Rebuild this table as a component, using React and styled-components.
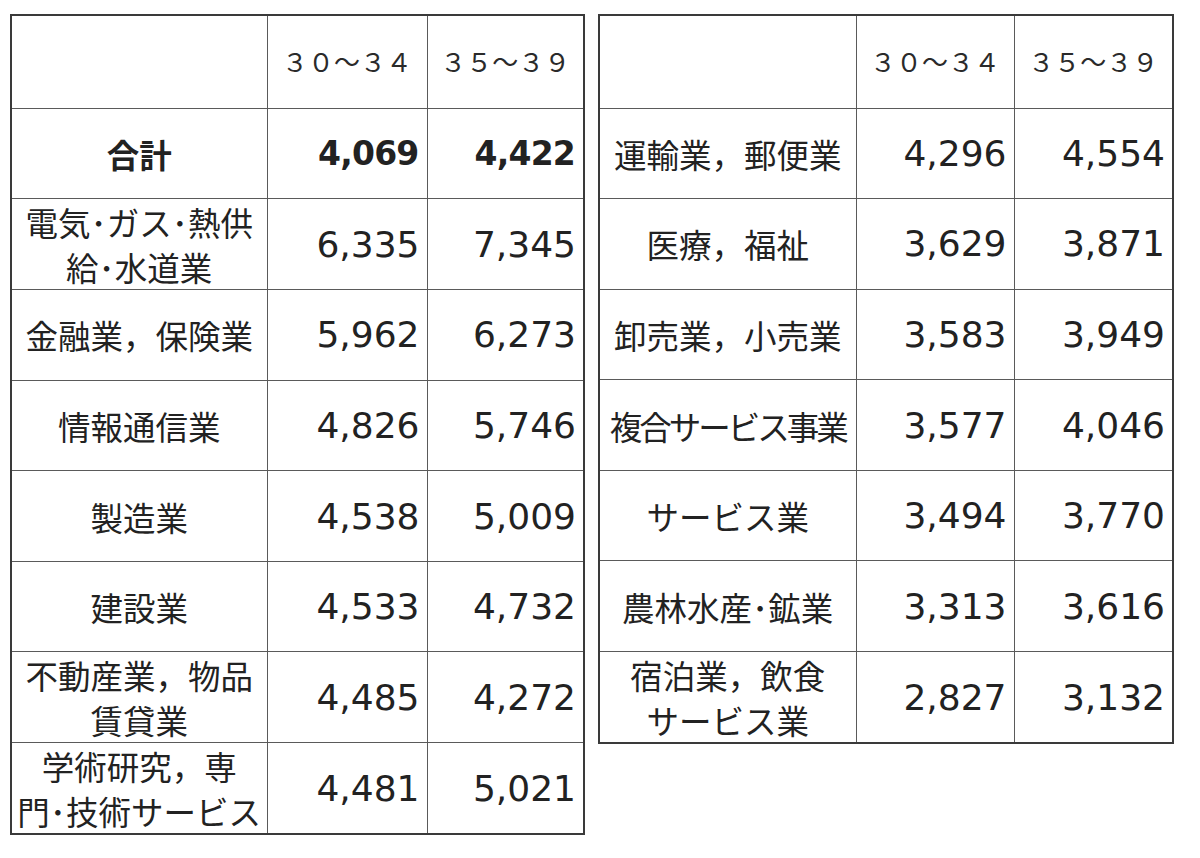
import React from 'react';
import styled, { createGlobalStyle } from 'styled-components';

const GlobalStyle = createGlobalStyle`
  html, body {
    margin: 0;
    padding: 0;
    background: #fff;
  }
`;

const Page = styled.div`
  display: flex;
  align-items: flex-start;
  gap: 13px;
  padding: 14px 0 0 10px;
  width: 1200px;
  height: 858px;
  box-sizing: border-box;
  background: #fff;
`;

const Table = styled.table`
  border-collapse: collapse;
  border: 2px solid #3a3a3a;
  table-layout: fixed;
  color: #222;
`;

const HeadRow = styled.tr`
  height: 93px;
`;

const Row = styled.tr`
  height: 90.6px;
`;

const Cell = styled.td`
  border: 1px solid #5a5a5a;
  padding: 0;
  vertical-align: middle;
  overflow: hidden;
`;

const HeadCell = styled(Cell)`
  text-align: center;
  font-family: 'Noto Sans CJK JP', sans-serif;
  font-size: 26px;
  color: #2a2a2a;
  padding-bottom: 2px;
`;

const Label = styled(Cell)`
  text-align: center;
  font-family: 'Noto Sans CJK JP', sans-serif;
  font-size: 32.5px;
  line-height: 45px;
  font-weight: ${p => (p.bold ? 700 : 400)};
  letter-spacing: ${p => (p.tight ? -3 : 0)}px;
  white-space: nowrap;
`;

const Num = styled(Cell)`
  text-align: right;
  padding-right: ${p => (p.bold ? 8 : 7)}px;
  font-family: 'DejaVu Sans', sans-serif;
  font-size: ${p => (p.bold ? 33 : 36)}px;
  font-weight: ${p => (p.bold ? 700 : 400)};
  letter-spacing: ${p => (p.bold ? -0.8 : 0)}px;
`;

const left = [
  { label: '合計', a: '4,069', b: '4,422', bold: true },
  { label: ['電気･ガス･熱供', '給･水道業'], a: '6,335', b: '7,345' },
  { label: '金融業，保険業', a: '5,962', b: '6,273' },
  { label: '情報通信業', a: '4,826', b: '5,746' },
  { label: '製造業', a: '4,538', b: '5,009' },
  { label: '建設業', a: '4,533', b: '4,732' },
  { label: ['不動産業，物品', '賃貸業'], a: '4,485', b: '4,272' },
  { label: ['学術研究，専', '門･技術サービス'], a: '4,481', b: '5,021' },
];

const right = [
  { label: '運輸業，郵便業', a: '4,296', b: '4,554' },
  { label: '医療，福祉', a: '3,629', b: '3,871' },
  { label: '卸売業，小売業', a: '3,583', b: '3,949' },
  { label: '複合サービス事業', a: '3,577', b: '4,046', tight: true },
  { label: 'サービス業', a: '3,494', b: '3,770' },
  { label: '農林水産･鉱業', a: '3,313', b: '3,616' },
  { label: ['宿泊業，飲食', 'サービス業'], a: '2,827', b: '3,132' },
];

const WageTable = ({ rows, widths }) => (
  <Table style={{ width: widths.reduce((s, w) => s + w, 0) }}>
    <colgroup>
      {widths.map((w, i) => (
        <col key={i} style={{ width: w }} />
      ))}
    </colgroup>
    <tbody>
      <HeadRow>
        <HeadCell />
        <HeadCell>３０～３４</HeadCell>
        <HeadCell>３５～３９</HeadCell>
      </HeadRow>
      {rows.map(r => (
        <Row key={r.a}>
          <Label bold={r.bold} tight={r.tight}>
            {Array.isArray(r.label) ? (
              <>
                {r.label[0]}
                <br />
                {r.label[1]}
              </>
            ) : (
              r.label
            )}
          </Label>
          <Num bold={r.bold}>{r.a}</Num>
          <Num bold={r.bold}>{r.b}</Num>
        </Row>
      ))}
    </tbody>
  </Table>
);

const App = () => (
  <>
    <GlobalStyle />
    <Page>
      <WageTable rows={left} widths={[256, 160, 157]} />
      <WageTable rows={right} widths={[257, 158, 159]} />
    </Page>
  </>
);

export default App;
